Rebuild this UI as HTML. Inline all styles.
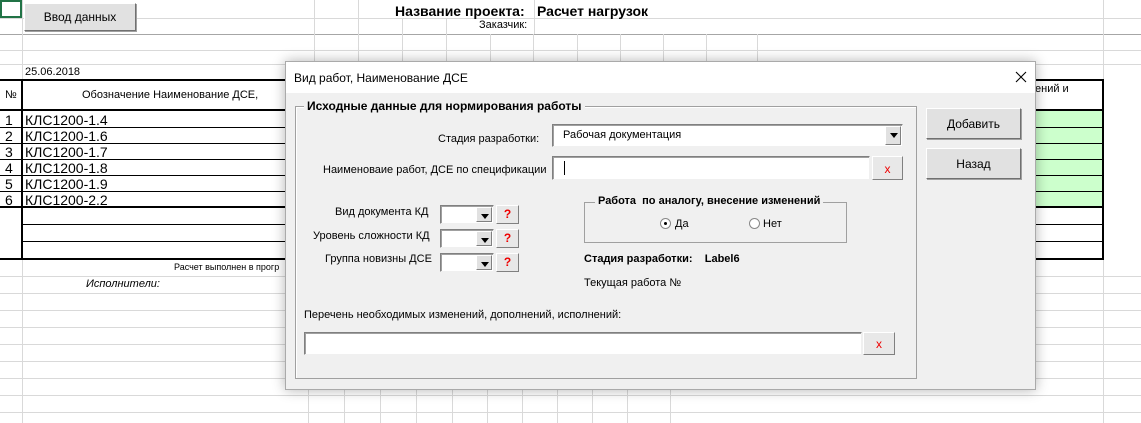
<!DOCTYPE html>
<html><head><meta charset="utf-8"><style>
*{margin:0;padding:0;box-sizing:border-box}
body{width:1141px;height:423px;overflow:hidden;background:#fff;font-family:"Liberation Sans","Noto Sans CJK SC",sans-serif;position:relative;font-size:11px;color:#000}
.a{position:absolute}
.h{position:absolute;left:0;width:1141px;height:1px;background:#d9d9d9}
.v{position:absolute;top:0;width:1px;height:423px;background:#d9d9d9}
.k{position:absolute;background:#000}
.btn{position:absolute;background:#e1e1e1;border:1px solid;border-color:#fff #707070 #707070 #fff;box-shadow:1px 1px 0 #a0a0a0;display:flex;align-items:center;justify-content:center;font-size:12px}
.inp{position:absolute;background:#fff;border:1px solid;border-color:#808080 #f0f0f0 #f0f0f0 #808080;box-shadow:inset 1px 1px 0 #a0a0a0}
.dd{position:absolute;right:1px;top:1px;bottom:1px;width:16px;background:#e1e1e1;border:1px solid;border-color:#fff #808080 #808080 #fff}
.dd:after{content:"";position:absolute;left:4px;top:6px;border:4px solid transparent;border-top:5px solid #000;border-bottom:0}
.q{position:absolute;width:23px;height:19px;background:#e8e8e8;border:1px solid;border-color:#fff #808080 #808080 #fff;color:#e00;font-weight:bold;font-size:12px;text-align:center;line-height:17px}
.lbl{position:absolute;font-size:11px;white-space:nowrap}
.x{position:absolute;background:#e8e8e8;border:1px solid;border-color:#fff #808080 #808080 #fff;color:#e00;font-size:12px;text-align:center}
</style></head><body>
<div class="h" style="top:18px"></div>
<div class="h" style="top:34px;background:#a6a6a6"></div>
<div class="h" style="top:50px"></div>
<div class="h" style="top:64px"></div>
<div class="h" style="top:276px"></div>
<div class="h" style="top:293px"></div>
<div class="h" style="top:310px"></div>
<div class="h" style="top:327px"></div>
<div class="h" style="top:344px"></div>
<div class="h" style="top:361px"></div>
<div class="h" style="top:378px"></div>
<div class="h" style="top:395px"></div>
<div class="h" style="top:412px"></div>
<div class="v" style="left:22px"></div>
<div class="v" style="left:1103px"></div>
<div class="v" style="left:314px;height:64px"></div>
<div class="v" style="left:358px;height:64px"></div>
<div class="v" style="left:402px;top:18px;height:46px"></div>
<div class="v" style="left:446px;top:18px;height:46px"></div>
<div class="v" style="left:490px;top:34px;height:30px"></div>
<div class="v" style="left:533px;top:34px;height:30px"></div>
<div class="v" style="left:577px;top:34px;height:30px"></div>
<div class="v" style="left:620px;top:34px;height:30px"></div>
<div class="v" style="left:663px;top:34px;height:30px"></div>
<div class="v" style="left:706px;top:34px;height:30px"></div>
<div class="v" style="left:534px;top:0;height:34px"></div>
<div class="v" style="left:757px;top:34px;height:30px"></div>
<div class="v" style="left:308px;top:390px;height:33px"></div>
<div class="v" style="left:344px;top:390px;height:33px"></div>
<div class="v" style="left:380px;top:390px;height:33px"></div>
<div class="v" style="left:416px;top:390px;height:33px"></div>
<div class="v" style="left:452px;top:390px;height:33px"></div>
<div class="v" style="left:487px;top:390px;height:33px"></div>
<div class="v" style="left:522px;top:390px;height:33px"></div>
<div class="v" style="left:557px;top:390px;height:33px"></div>
<div class="v" style="left:592px;top:390px;height:33px"></div>
<div class="v" style="left:627px;top:390px;height:33px"></div>
<div class="v" style="left:670px;top:390px;height:33px"></div>
<div class="a" style="left:0;top:0;width:22px;height:18px;border:2px solid #217346"></div>
<div class="btn" style="left:24px;top:3px;width:112px;height:28px;font-size:12px">Ввод данных</div>
<div class="a" style="left:395px;top:3px;font-size:14px;font-weight:bold">Название проекта:</div>
<div class="a" style="left:537px;top:3px;font-size:14px;font-weight:bold">Расчет нагрузок</div>
<div class="a" style="left:479px;top:19px;font-size:11px">Заказчик:</div>
<div class="a" style="left:25px;top:66px;font-size:11px">25.06.2018</div>
<div class="a" style="left:22px;top:81px;width:1081px;height:29px;background:#fff"></div>
<div class="a" style="left:1035px;top:111px;width:68px;height:96px;background:#ccffcc"></div>
<div class="k" style="left:0;top:79px;width:1104px;height:2px"></div>
<div class="k" style="left:0;top:109px;width:1104px;height:2px"></div>
<div class="k" style="left:0;top:206px;width:1104px;height:2px"></div>
<div class="k" style="left:0;top:258px;width:1104px;height:2px"></div>
<div class="k" style="left:21px;top:79px;width:2px;height:181px"></div>
<div class="k" style="left:1102px;top:79px;width:2px;height:181px"></div>
<div class="k" style="left:0;top:127px;width:1104px;height:1px"></div>
<div class="k" style="left:0;top:143px;width:1104px;height:1px"></div>
<div class="k" style="left:0;top:159px;width:1104px;height:1px"></div>
<div class="k" style="left:0;top:175px;width:1104px;height:1px"></div>
<div class="k" style="left:0;top:191px;width:1104px;height:1px"></div>
<div class="k" style="left:22px;top:224px;width:1082px;height:1px"></div>
<div class="k" style="left:22px;top:241px;width:1082px;height:1px"></div>
<div class="a" style="left:5px;top:89px;font-size:11px">№</div>
<div class="a" style="left:82px;top:89px;font-size:11px">Обозначение Наименование ДСЕ,</div>
<div class="a" style="left:1035px;top:83px;font-size:11px">ений и</div>
<div class="a" style="left:5px;top:112px;font-size:14px;line-height:16px">1<br>2<br>3<br>4<br>5<br>6</div>
<div class="a" style="left:25px;top:112px;font-size:14px;line-height:16px">КЛС1200-1.4<br>КЛС1200-1.6<br>КЛС1200-1.7<br>КЛС1200-1.8<br>КЛС1200-1.9<br>КЛС1200-2.2</div>
<div class="a" style="left:174px;top:262px;font-size:9px">Расчет выполнен в прогр</div>
<div class="a" style="left:86px;top:278px;font-size:11px;font-style:italic">Исполнители:</div>
<div class="a" style="left:285px;top:61px;width:751px;height:329px;background:#f0f0f0;border:1px solid #aaa;box-shadow:0 0 12px rgba(0,0,0,.3)">
 <div class="a" style="left:0;top:0;width:749px;height:31px;background:#fff"></div>
 <div class="a" style="left:8px;top:9px;font-size:12px">Вид работ, Наименование ДСЕ</div>
 <svg class="a" style="left:729px;top:9px" width="12" height="12" viewBox="0 0 12 12"><path d="M1 1L11 11M11 1L1 11" stroke="#000" stroke-width="1.1"/></svg>
</div>
<div class="a" style="left:295px;top:106px;width:622px;height:273px;border:1px solid #a0a0a0;box-shadow:1px 1px 0 #fff inset"></div>
<div class="a" style="left:304px;top:99px;padding:0 3px;background:#f0f0f0;font-size:12px;font-weight:bold">Исходные данные для нормирования работы</div>
<div class="btn" style="left:926px;top:108px;width:95px;height:31px">Добавить</div>
<div class="btn" style="left:926px;top:148px;width:95px;height:31px">Назад</div>
<div class="lbl" style="left:438px;top:133px">Стадия разработки:</div>
<div class="inp" style="left:552px;top:124px;width:351px;height:23px"><div class="a" style="left:10px;top:4px;font-size:11px">Рабочая документация</div><div class="dd"></div></div>
<div class="lbl" style="left:323px;top:164px">Наименоваие работ, ДСЕ по спецификации</div>
<div class="inp" style="left:552px;top:156px;width:318px;height:24px"><div class="a" style="left:11px;top:4px;width:1px;height:14px;background:#000"></div></div>
<div class="x" style="left:872px;top:156px;width:31px;height:24px;line-height:24px">x</div>
<div class="lbl" style="left:335px;top:206px">Вид документа КД</div>
<div class="lbl" style="left:313px;top:230px">Уровень сложности КД</div>
<div class="lbl" style="left:325px;top:253px">Группа новизны ДСЕ</div>
<div class="inp" style="left:440px;top:205px;width:54px;height:19px"><div class="dd"></div></div>
<div class="inp" style="left:440px;top:229px;width:54px;height:19px"><div class="dd"></div></div>
<div class="inp" style="left:440px;top:253px;width:54px;height:19px"><div class="dd"></div></div>
<div class="q" style="left:496px;top:205px">?</div>
<div class="q" style="left:496px;top:229px">?</div>
<div class="q" style="left:496px;top:253px">?</div>
<div class="a" style="left:584px;top:202px;width:263px;height:41px;border:1px solid #a0a0a0"></div>
<div class="a" style="left:595px;top:195px;padding:0 3px;background:#f0f0f0;font-size:11px;font-weight:bold">Работа&nbsp; по аналогу, внесение изменений</div>
<div class="a" style="left:660px;top:218px;width:11px;height:11px;border-radius:50%;background:#fff;border:1px solid #888"><div class="a" style="left:3px;top:3px;width:3px;height:3px;border-radius:50%;background:#000"></div></div>
<div class="lbl" style="left:675px;top:218px">Да</div>
<div class="a" style="left:749px;top:218px;width:11px;height:11px;border-radius:50%;background:#fff;border:1px solid #888"></div>
<div class="lbl" style="left:763px;top:218px">Нет</div>
<div class="lbl" style="left:584px;top:253px;font-weight:bold">Стадия разработки:&nbsp;&nbsp;&nbsp; Label6</div>
<div class="lbl" style="left:584px;top:277px">Текущая работа №</div>
<div class="lbl" style="left:304px;top:309px">Перечень необходимых изменений, дополнений, исполнений:</div>
<div class="inp" style="left:304px;top:332px;width:558px;height:23px"></div>
<div class="x" style="left:863px;top:332px;width:32px;height:23px;line-height:22px">x</div>
</body></html>
